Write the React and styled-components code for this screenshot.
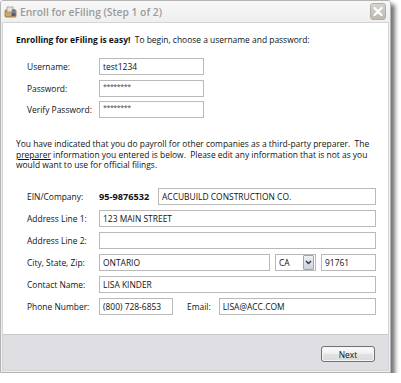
import React from "react";
import styled, { createGlobalStyle } from "styled-components";

const Global = createGlobalStyle`
  html, body { margin: 0; padding: 0; background: #ffffff; }
  body { font-family: "Open Sans", "Noto Sans", sans-serif; }
`;

const FONT = `"Open Sans", "Noto Sans", sans-serif`;

const Window = styled.div`
  width: 389px;
  height: 371px;
  border: 1px solid #b4b4b4;
  border-radius: 3px 3px 0 0;
  background: #eef0f2;
  box-shadow: 4px 4px 4px rgba(0, 0, 0, 0.55);
  display: flex;
  flex-direction: column;
  font-family: ${FONT};
  color: #111;
  overflow: hidden;
`;

const TitleBar = styled.div`
  height: 21px;
  flex: none;
  display: flex;
  align-items: center;
  padding: 0 3px 0 3px;
  background: linear-gradient(#f7f7f7, #efefef);
`;

const TitleText = styled.div`
  flex: 1;
  margin-left: 3px;
  font-size: 10.3px;
  font-weight: 600;
  color: #9a9a9a;
`;

const CloseBtn = styled.div`
  width: 14px;
  height: 15px;
  border-radius: 3px;
  border: 1px solid #b3afa8;
  background: linear-gradient(#d7d3cd, #bdb8b0);
  display: flex;
  align-items: center;
  justify-content: center;
  margin-right: 1px;
`;

const Client = styled.div`
  flex: 1;
  margin: 0 1px 1px 1px;
  border: 1px solid #d2d4d6;
  display: flex;
  flex-direction: column;
  background: #ffffff;
`;

const Body = styled.div`
  flex: 1;
  padding: 10px 12px 0 13px;
  font-size: 8.45px;
`;

const Heading = styled.div`
  line-height: 14px;
  white-space: pre;
`;

const Strong = styled.span`
  font-weight: 700;
`;

const Grid = styled.div`
  display: grid;
  grid-template-columns: ${(p) => p.$label}px 1fr;
  row-gap: ${(p) => p.$gap}px;
  padding-left: 11px;
  margin-top: ${(p) => p.$top}px;
`;

const Label = styled.div`
  height: 17px;
  display: flex;
  align-items: center;
  white-space: nowrap;
`;

const Field = styled.div`
  height: 17px;
  display: flex;
  align-items: center;
  gap: ${(p) => p.$gap || 0}px;
`;

const Input = styled.div`
  box-sizing: border-box;
  height: 17px;
  width: ${(p) => (p.$w ? `${p.$w}px` : "auto")};
  flex: ${(p) => (p.$w ? "none" : "1")};
  border: 1px solid #b9b9b9;
  background: #fff;
  padding: 0 3px;
  display: flex;
  align-items: center;
  font-size: 8.45px;
  white-space: nowrap;
  overflow: hidden;
`;

const Mask = styled.span`
  font-size: 7px;
  letter-spacing: -0.4px;
  color: #444;
  position: relative;
  top: -2px;
`;

const EinValue = styled.span`
  font-weight: 700;
  font-size: 9.2px;
  width: 59px;
  flex: none;
`;

const Para = styled.p`
  margin: 21px 0 0 0;
  line-height: 10.5px;
  white-space: nowrap;
`;

const Under = styled.span`
  text-decoration: underline;
`;

const SelectBox = styled.div`
  box-sizing: border-box;
  height: 17px;
  width: 41px;
  flex: none;
  border: 1px solid #b9b9b9;
  background: #fff;
  display: flex;
  align-items: center;
  padding-left: 3px;
`;

const SelectText = styled.span`
  flex: 1;
`;

const SelectArrow = styled.div`
  width: 9px;
  height: 13px;
  margin-right: 1px;
  border: 1px solid #9ea6b4;
  border-radius: 1px;
  background: linear-gradient(#eef1f6, #cbd2de);
  display: flex;
  align-items: center;
  justify-content: center;
`;

const InlineLabel = styled.span`
  flex: none;
  margin: 0 8px 0 14px;
`;

const Footer = styled.div`
  height: 36px;
  flex: none;
  border-top: 1px solid #c9c9cd;
  background: #dfdfe3;
  display: flex;
  align-items: flex-start;
  justify-content: flex-end;
  padding: 11px 13px 0 0;
  box-sizing: border-box;
`;

const Button = styled.div`
  box-sizing: border-box;
  width: 54px;
  height: 16px;
  border: 1px solid #6f7074;
  border-radius: 3px;
  background: linear-gradient(#fbfbfb 0%, #efefef 50%, #e2e2e2 51%, #dadada 100%);
  box-shadow: inset 0 0 0 1px #f6f6f6;
  font-size: 8.45px;
  display: flex;
  align-items: center;
  justify-content: center;
  color: #111;
`;

const AppIcon = () => (
  <svg width="13" height="12" viewBox="0 0 13 12">
    <rect x="1" y="4" width="11" height="7" rx="1" fill="#c9a86a" stroke="#8a6d3a" strokeWidth="0.8" />
    <rect x="3" y="1" width="6" height="5" fill="#e8e2d2" stroke="#8a8070" strokeWidth="0.6" />
    <circle cx="9.5" cy="5" r="2" fill="#6a7c96" />
    <rect x="7.5" y="7" width="4" height="3" fill="#4b5f7d" />
  </svg>
);

const XIcon = () => (
  <svg width="10" height="9" viewBox="0 0 10 9">
    <path d="M1.5 1 L8.5 8 M8.5 1 L1.5 8" stroke="#ffffff" strokeWidth="2.2" strokeLinecap="round" />
  </svg>
);

const Chevron = () => (
  <svg width="7" height="5" viewBox="0 0 7 5">
    <path d="M1 1 L3.5 3.5 L6 1" stroke="#2b3548" strokeWidth="1.4" fill="none" />
  </svg>
);

export default function App() {
  return (
    <>
      <Global />
      <Window>
        <TitleBar>
          <AppIcon />
          <TitleText>Enroll for eFiling (Step 1 of 2)</TitleText>
          <CloseBtn>
            <XIcon />
          </CloseBtn>
        </TitleBar>
        <Client>
          <Body>
            <Heading>
              <Strong>Enrolling for eFiling is easy!</Strong>{"  To begin, choose a username and password:"}
            </Heading>
            <Grid $label={72} $gap={4.5} $top={11}>
              <Label>Username:</Label>
              <Field>
                <Input $w={105}>test1234</Input>
              </Field>
              <Label>Password:</Label>
              <Field>
                <Input $w={105}>
                  <Mask>********</Mask>
                </Input>
              </Field>
              <Label>Verify Password:</Label>
              <Field>
                <Input $w={105}>
                  <Mask>********</Mask>
                </Input>
              </Field>
            </Grid>
            <Para>
              You have indicated that you do payroll for other companies as a third-party preparer.&nbsp; The
              <br />
              <Under>preparer</Under> information you entered is below.&nbsp; Please edit any information that is not as you
              <br />
              would want to use for official filings.
            </Para>
            <Grid $label={72} $gap={5} $top={17}>
              <Label>EIN/Company:</Label>
              <Field>
                <EinValue>95-9876532</EinValue>
                <Input>ACCUBUILD CONSTRUCTION CO.</Input>
              </Field>
              <Label>Address Line 1:</Label>
              <Field>
                <Input>123 MAIN STREET</Input>
              </Field>
              <Label>Address Line 2:</Label>
              <Field>
                <Input />
              </Field>
              <Label>City, State, Zip:</Label>
              <Field $gap={5}>
                <Input>ONTARIO</Input>
                <SelectBox>
                  <SelectText>CA</SelectText>
                  <SelectArrow>
                    <Chevron />
                  </SelectArrow>
                </SelectBox>
                <Input $w={55}>91761</Input>
              </Field>
              <Label>Contact Name:</Label>
              <Field>
                <Input>LISA KINDER</Input>
              </Field>
              <Label>Phone Number:</Label>
              <Field>
                <Input $w={74}>(800) 728-6853</Input>
                <InlineLabel>Email:</InlineLabel>
                <Input>LISA@ACC.COM</Input>
              </Field>
            </Grid>
          </Body>
          <Footer>
            <Button>Next</Button>
          </Footer>
        </Client>
      </Window>
    </>
  );
}
